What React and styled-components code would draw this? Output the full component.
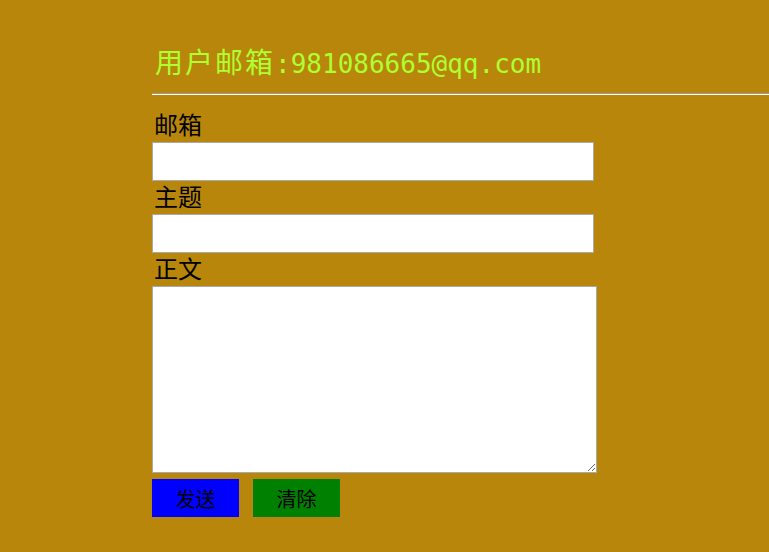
import React from "react";
import styled, { createGlobalStyle } from "styled-components";

const Global = createGlobalStyle`
  html, body { margin: 0; padding: 0; background: #b8860b; }
  body { font-family: "Noto Sans CJK SC", "Noto Sans", sans-serif; }
`;

const Page = styled.div`
  padding: 43px 0 0 152px;
  min-height: 552px;
  box-sizing: border-box;
`;

const Title = styled.h1`
  margin: 0;
  height: 41px;
  line-height: 33px;
  color: #adff2f;
  font-weight: normal;
  white-space: nowrap;
  padding-left: 3px;
`;

const Cjk = styled.span`
  font-family: "Noto Sans CJK SC", sans-serif;
  font-size: 28px;
  letter-spacing: 2px;
`;

const Mono = styled.span`
  font-family: "DejaVu Sans Mono", monospace;
  font-size: 26px;
`;

const Rule = styled.hr`
  margin: 9px 0 14px;
  height: 0;
  border: none;
  border-top: 1px solid #9a9a9a;
  border-bottom: 1px solid #ffffff;
`;

const Form = styled.form`
  display: flex;
  flex-direction: column;
  align-items: flex-start;
`;

const Label = styled.label`
  display: block;
  height: 33px;
  line-height: 30px;
  font-size: 24px;
  color: #000;
  padding-left: 2px;
`;

const Field = styled.input`
  box-sizing: border-box;
  width: 442px;
  height: 39px;
  margin: 0;
  border: 1px solid #a9a9a9;
  background: #fff;
  outline: none;
  padding: 0 4px;
`;

const Area = styled.textarea`
  box-sizing: border-box;
  width: 445px;
  height: 187px;
  margin: 0;
  border: 1px solid #a9a9a9;
  background: #fff;
  outline: none;
`;

const Buttons = styled.div`
  display: flex;
  gap: 14px;
  margin-top: 6px;
`;

const Btn = styled.button`
  width: 87px;
  height: 38px;
  border: none;
  margin: 0;
  padding: 0;
  background: ${(p) => p.$bg};
  color: #000;
  font-family: "Noto Sans CJK SC", sans-serif;
  font-size: 20px;
  cursor: pointer;
`;

export default function App() {
  return (
    <>
      <Global />
      <Page>
        <Title>
          <Cjk>用户邮箱</Cjk>
          <Mono>:981086665@qq.com</Mono>
        </Title>
        <Rule />
        <Form onSubmit={(e) => e.preventDefault()}>
          <Label>邮箱</Label>
          <Field type="text" />
          <Label>主题</Label>
          <Field type="text" />
          <Label>正文</Label>
          <Area />
          <Buttons>
            <Btn type="submit" $bg="#0000ff">发送</Btn>
            <Btn type="reset" $bg="#008000">清除</Btn>
          </Buttons>
        </Form>
      </Page>
    </>
  );
}
